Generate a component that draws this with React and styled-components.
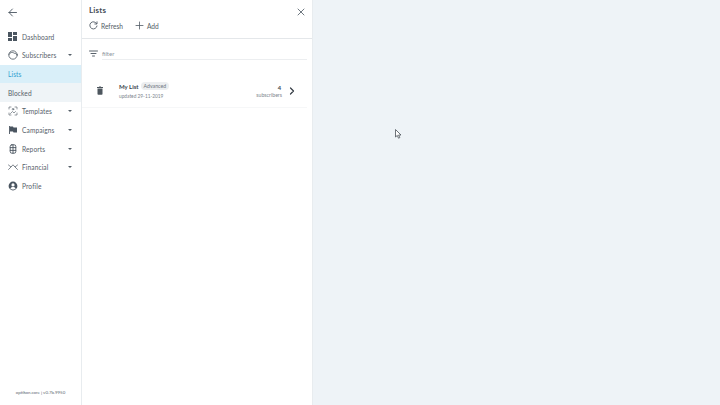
import React from "react";
import styled, { createGlobalStyle } from "styled-components";

const Global = createGlobalStyle`
  html, body { margin: 0; padding: 0; height: 100%; }
  body { font-family: "Lato", "Open Sans", sans-serif; color: #3c4650; background: #fff; }
  #root { height: 405px; }
`;

const Page = styled.div`
  position: relative; display: flex; width: 720px; height: 405px; overflow: hidden; opacity: .999;
`;
const Sidebar = styled.aside`
  width: 82px; box-sizing: border-box; flex: none; display: flex; flex-direction: column;
  border-right: 1px solid #e8ecef; background: #fff;
`;
const Back = styled.div`
  height: 27.5px; padding-left: 8px; display: flex; align-items: flex-end; color: #4a5560;
`;
const Nav = styled.nav`
  display: flex; flex-direction: column;
`;
const NavItem = styled.div`
  height: 18.67px; display: flex; align-items: center; padding-left: 8px; box-sizing: border-box;
  font-size: 6.6px; letter-spacing: .1px; color: ${p => p.$color || "#56606a"};
  background: ${p => p.$bg || "transparent"};
`;
const NavIcon = styled.span`
  width: 13px; margin-right: 1px; height: 11px; display: flex; align-items: center; color: #4a5560;
`;
const Caret = styled.span`
  margin-left: auto; margin-right: 9px; width: 0; height: 0;
  border-left: 2.4px solid transparent; border-right: 2.4px solid transparent; border-top: 2.6px solid #555f69;
`;
const Version = styled.div`
  margin-top: auto; padding-bottom: 10px; text-align: center; font-size: 4.4px; color: #5c6670;
`;
const Panel = styled.main`
  width: 231px; flex: none; display: flex; flex-direction: column;
  border-right: 1px solid #e8ecef; box-sizing: border-box; background: #fff;
`;
const Header = styled.header`
  height: 39px; box-sizing: border-box; padding: 4px 7px 0 7px; border-bottom: 1px solid #e4e7ea;
  display: flex; flex-direction: column;
`;
const TitleRow = styled.div`
  display: flex; align-items: center; justify-content: space-between; height: 11px;
`;
const Title = styled.h1`
  margin: 0; font-size: 8px; font-weight: 700; color: #454e57; letter-spacing: .2px;
`;
const Actions = styled.div`
  display: flex; gap: 12px; margin-top: 4.5px; height: 12px; align-items: center;
`;
const Action = styled.span`
  display: flex; align-items: center; gap: 3px; font-size: 6.6px; color: #525c66;
`;
const FilterRow = styled.div`
  display: flex; align-items: center; padding: 8px 5px 0 7px; height: 12px;
`;
const FilterIcon = styled.span`
  width: 13px; display: flex; color: #46505a;
`;
const FilterField = styled.div`
  flex: 1; height: 12px; line-height: 14px; font-size: 6px; color: #8b949c;
  border-bottom: 1px solid #eceef0;
`;
const Row = styled.div`
  margin: 15.5px 5px 0 0; height: 32px; padding-left: 14px; padding-right: 12px;
  display: flex; align-items: center; border-bottom: 1px solid #f6f7f8;
`;
const Trash = styled.span`
  width: 23px; display: flex; color: #4d565e;
`;
const RowMain = styled.div`
  flex: 1; display: flex; flex-direction: column; gap: 3px;
`;
const NameLine = styled.div`
  display: flex; align-items: center; gap: 2px;
`;
const Name = styled.span`
  font-size: 6px; font-weight: 700; color: #3d454d;
`;
const Badge = styled.span`
  background: #eceef0; border-radius: 5px; padding: 0 3px; font-size: 5.2px; line-height: 8px; color: #6d767e;
`;
const Updated = styled.span`
  font-size: 4.8px; color: #7c858d;
`;
const Count = styled.div`
  display: flex; flex-direction: column; align-items: flex-end; margin-right: 7px; gap: 1px;
`;
const CountNum = styled.span`
  font-size: 5.8px; font-weight: 700; color: #3d454d; margin-right: 1px;
`;
const CountLabel = styled.span`
  font-size: 5.2px; color: #7c858d;
`;
const Right = styled.section`
  flex: 1; background: #eef3f7;
`;
const Cursor = styled.svg`
  position: absolute; left: 395px; top: 129px;
`;

const s = { fill: "none", stroke: "currentColor", strokeWidth: 1, strokeLinecap: "round", strokeLinejoin: "round" };

const items = [
  { label: "Dashboard", icon: <svg width="9" height="9" viewBox="0 0 9 9" fill="currentColor"><rect width="4" height="5" /><rect x="5" width="4" height="3" /><rect y="6" width="4" height="3" /><rect x="5" y="4" width="4" height="5" /></svg> },
  { label: "Subscribers", caret: true, icon: <svg width="10" height="10" viewBox="0 0 10 10" {...s} strokeWidth=".8"><circle cx="5" cy="5" r="4.2" /><path d="M1 4.5C2 2 5 2 6 3.2 7 3.5 8.4 3.4 9 4.6" /></svg> },
  { label: "Lists", sub: true, active: true },
  { label: "Blocked", sub: true },
  { label: "Templates", caret: true, icon: <svg width="10" height="10" viewBox="0 0 10 10" {...s} strokeWidth=".6"><path d="M1 3V1H3M7 1H9V3M9 7V9H7M3 9H1V7" /><path d="M2.500 7.500L4.500 5.500 6 7 7.500 5.500" /><circle cx="5" cy="3.200" r=".8" /></svg> },
  { label: "Campaigns", caret: true, icon: <svg width="10" height="10" viewBox="0 0 10 10" fill="currentColor"><path d="M1 1h.9v8H1zM2 1.500h3l.5 1H9v5H5.500L5 6.500H2z" /></svg> },
  { label: "Reports", caret: true, icon: <svg width="10" height="10" viewBox="0 0 10 10" {...s} strokeWidth=".9"><rect x="2.200" y=".8" width="5.600" height="8.400" rx="1.600" /><path d="M2.200 3.600h5.600M2.200 6.400h5.600M5 .8v8.400" /></svg> },
  { label: "Financial", caret: true, icon: <svg width="10" height="10" viewBox="0 0 10 10" {...s} strokeWidth=".7"><path d="M.5 3L3 5 5 2.800 7 5 9.500 3M.5 7.500L3 5M9.500 7.500L7 5" /></svg> },
  { label: "Profile", icon: <svg width="10" height="10" viewBox="0 0 10 10" fill="currentColor"><path fillRule="evenodd" d="M5 .6a4.400 4.400 0 1 0 0 8.800 4.400 4.400 0 0 0 0-8.800zm0 1.700a1.600 1.600 0 1 1 0 3.200 1.600 1.600 0 0 1 0-3.200zM2.400 7.400C3 6.400 4 6 5 6s2 .4 2.600 1.400C7 8.100 6 8.500 5 8.500s-2-.4-2.600-1.100z" /></svg> },
];

export default function App() {
  return (
    <Page>
      <Global />
      <Sidebar>
        <Back>
          <svg width="9" height="9" viewBox="0 0 9 9" {...s} strokeWidth=".9" style={{ marginBottom: 11 }}><path d="M8.500 4.500H1M4.400 1L1 4.500 4.400 8" /></svg>
        </Back>
        <Nav>
          {items.map(it => (
            <NavItem key={it.label}
              $bg={it.active ? "#d9eff9" : it.label === "Blocked" ? "#eff4f7" : undefined}
              $color={it.active ? "#2f9fd0" : undefined}>
              {!it.sub && <NavIcon>{it.icon}</NavIcon>}
              {it.label}
              {it.caret && <Caret />}
            </NavItem>
          ))}
        </Nav>
        <Version>optikon.core | v0.7b.9950</Version>
      </Sidebar>
      <Panel>
        <Header>
          <TitleRow>
            <Title>Lists</Title>
            <svg width="8" height="8" viewBox="0 0 8 8" {...s} strokeWidth=".8" style={{ color: "#4a5560", marginTop: 5 }}><path d="M1 1l6 6M7 1L1 7" /></svg>
          </TitleRow>
          <Actions>
            <Action>
              <svg width="9" height="9" viewBox="0 0 9 9" {...s} strokeWidth=".9"><path d="M7.600 2.600A3.600 3.600 0 1 0 8 5" /><path d="M8 .8v2.200H5.800" /></svg>
              Refresh
            </Action>
            <Action>
              <svg width="9" height="9" viewBox="0 0 9 9" {...s} strokeWidth=".8"><path d="M4.500 1v7M1 4.500h7" /></svg>
              Add
            </Action>
          </Actions>
        </Header>
        <FilterRow>
          <FilterIcon>
            <svg width="9" height="7" viewBox="0 0 9 7" {...s} strokeWidth=".9"><path d="M.5 1h8M2 3.500h5M3.500 6h2" /></svg>
          </FilterIcon>
          <FilterField>filter</FilterField>
        </FilterRow>
        <Row>
          <Trash>
            <svg width="8" height="9" viewBox="0 0 8 9" fill="currentColor"><path d="M1.500 2.500h5V8a.8.8 0 0 1-.8.8H2.300A.8.8 0 0 1 1.500 8zM1 1h1.800l.4-.5h1.600l.4.500H7v1H1z" /></svg>
          </Trash>
          <RowMain>
            <NameLine>
              <Name>My List</Name>
              <Badge>Advanced</Badge>
            </NameLine>
            <Updated>updated 29-11-2019</Updated>
          </RowMain>
          <Count>
            <CountNum>4</CountNum>
            <CountLabel>subscribers</CountLabel>
          </Count>
          <svg width="6" height="8" viewBox="0 0 6 8" {...s} strokeWidth="1.200" style={{ color: "#333b43" }}><path d="M1.500 1l3 3-3 3" /></svg>
        </Row>
      </Panel>
      <Right />
      <Cursor width="7" height="10" viewBox="0 0 7 10"><path d="M.5.500v7.500l1.800-1.600 1.200 2.800 1.300-.6-1.200-2.600h2.400z" fill="#fff" stroke="#4a5058" strokeWidth=".8" /></Cursor>
    </Page>
  );
}
